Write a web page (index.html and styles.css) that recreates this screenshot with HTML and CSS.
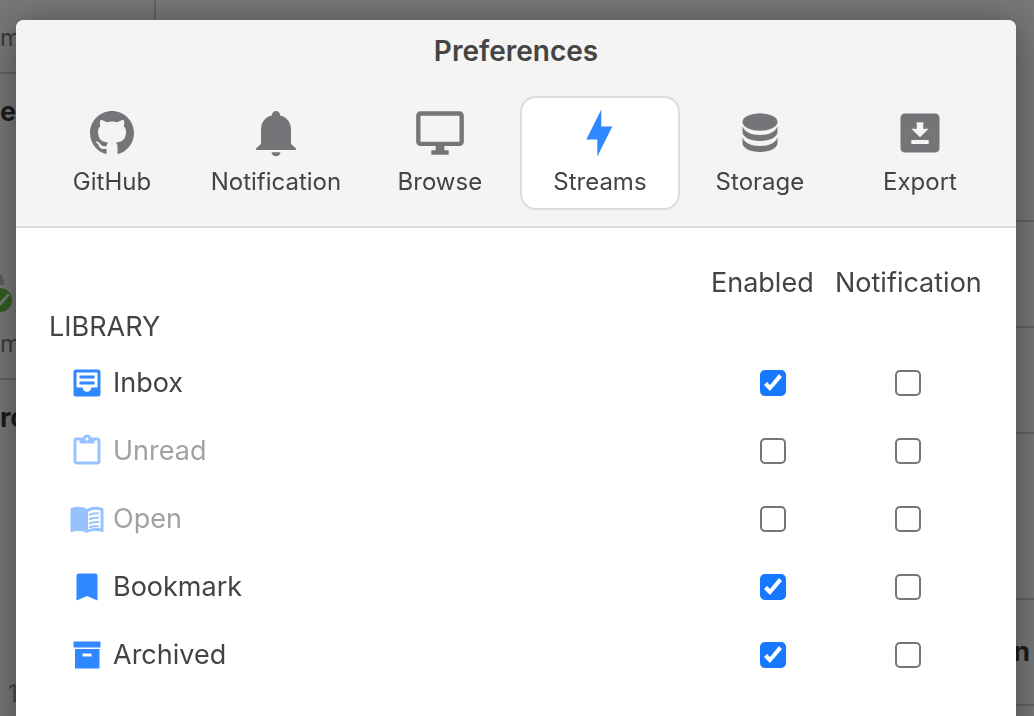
FILE: index.html
```html
<!DOCTYPE html>
<html lang="en">
<head>
<meta charset="utf-8">
<title>Preferences</title>
<link rel="stylesheet" href="styles.css">
</head>
<body>
<div class="app" aria-hidden="true">
  <div class="streams">
    <div class="entry entry-first"><span class="meta">m</span></div>
    <div class="entry">
      <strong class="name">e</strong>
      <svg class="state" viewBox="0 0 16 44"><path d="M-10 0C-2 0 4 6 4 16H-10z" fill="#5b5b5f"/><circle cx="0" cy="31" r="12" fill="#2f5f22"/><path d="M-5 32l4 4L9 25" fill="none" stroke="#777" stroke-width="3"/></svg>
      <span class="meta">m</span>
    </div>
    <div class="entry entry-tall">
      <strong class="name">ro</strong>
      <span class="count">1</span>
    </div>
  </div>
  <div class="issues">
    <div class="issue issue-top"></div>
    <div class="issue"></div>
    <div class="issue"></div>
    <div class="issue issue-tall"></div>
    <div class="issue"><strong>n</strong></div>
  </div>
</div>

<div class="overlay">
  <main class="dialog" role="dialog" aria-labelledby="title">
    <header class="head">
      <h1 id="title" class="title">Preferences</h1>
      <nav class="tabs">
        <button class="tab" type="button">
          <svg class="tab-icon" viewBox="0 0 52 52"><path transform="translate(4 4) scale(2.75)" fill-rule="evenodd" d="M8 0C3.58 0 0 3.58 0 8c0 3.54 2.29 6.53 5.47 7.59.4.07.55-.17.55-.38 0-.19-.01-.82-.01-1.49-2.01.37-2.53-.49-2.69-.94-.09-.23-.48-.94-.82-1.13-.28-.15-.68-.52-.01-.53.63-.01 1.08.58 1.23.82.72 1.21 1.87.87 2.33.66.07-.52.28-.87.51-1.07-1.78-.2-3.64-.89-3.64-3.95 0-.87.31-1.59.82-2.15-.08-.2-.36-1.02.08-2.12 0 0 .67-.21 2.2.82.64-.18 1.32-.27 2-.27.68 0 1.36.09 2 .27 1.53-1.04 2.2-.82 2.2-.82.44 1.1.16 1.92.08 2.12.51.56.82 1.27.82 2.15 0 3.07-1.87 3.75-3.65 3.95.29.25.54.73.54 1.48 0 1.07-.01 1.93-.01 2.2 0 .21.15.46.55.38A8.013 8.013 0 0 0 16 8c0-4.42-3.58-8-8-8z"/></svg>
          <span>GitHub</span>
        </button>
        <button class="tab" type="button">
          <svg class="tab-icon" viewBox="0 0 52 52"><path d="M26 4c2.300 0 3.900 1.500 4.200 4.500C37 10 41 15.500 41 22.500V37l5 4.500V43H6v-1.500l5-4.500V22.500C11 15.500 15 10 21.800 8.500 22.100 5.500 23.700 4 26 4z"/><path d="M21.500 45.300h9c-.5 2.500-2.200 4-4.500 4s-4-1.500-4.500-4z"/></svg>
          <span>Notification</span>
        </button>
        <button class="tab" type="button">
          <svg class="tab-icon" viewBox="0 0 24 24"><path d="M21 2H3c-1.100 0-2 .9-2 2v12c0 1.100.9 2 2 2h7v2H8v2h8v-2h-2v-2h7c1.100 0 2-.9 2-2V4c0-1.100-.9-2-2-2zm0 14H3V4h18v12z"/></svg>
          <span>Browse</span>
        </button>
        <button class="tab tab-active" type="button" aria-current="page">
          <svg class="tab-icon" viewBox="0 0 52 52"><path d="M27.300 2.500v17H38.300l-15 30v-17H12.300z"/></svg>
          <span>Streams</span>
        </button>
        <button class="tab" type="button">
          <svg class="tab-icon" viewBox="0 0 52 52"><ellipse cx="26" cy="15" rx="17.500" ry="8.700"/><path d="M8.500 19.500c2 5 8.500 8.500 17.500 8.500s15.500-3.500 17.500-8.500V25c0 5-7.500 9-17.500 9S8.500 30 8.500 25z"/><path d="M8.500 30.500c2 5 8.500 8.500 17.500 8.500s15.500-3.500 17.500-8.500V36c0 5-7.500 9-17.500 9S8.500 41 8.500 36z"/></svg>
          <span>Storage</span>
        </button>
        <button class="tab" type="button">
          <svg class="tab-icon" viewBox="0 0 24 24"><path fill-rule="evenodd" d="M5 3h14a2 2 0 0 1 2 2v14a2 2 0 0 1-2 2H5a2 2 0 0 1-2-2V5a2 2 0 0 1 2-2zM10.500 7v3H8l4 4 4-4h-2.500V7zM8 15.200v1.900h8v-1.900z"/></svg>
          <span>Export</span>
        </button>
      </nav>
    </header>

    <section class="body">
      <table class="grid">
        <thead>
          <tr><td></td><th class="col-enabled" id="enabled" scope="col">Enabled</th><th class="col-notify" id="notify" scope="col">Notification</th></tr>
        </thead>
        <tbody>
          <tr class="group"><th scope="rowgroup" colspan="3">LIBRARY</th></tr>
          <tr>
            <th scope="row"><div class="stream"><svg class="icon" viewBox="0 0 36 36"><path fill-rule="evenodd" d="M7 4.500h22a2.500 2.500 0 0 1 2.500 2.500v22a2.500 2.500 0 0 1-2.500 2.500H7A2.500 2.500 0 0 1 4.500 29V7A2.500 2.500 0 0 1 7 4.500zM7.500 7.500v15h6c.3 2.500 2 4.200 4.500 4.200s4.200-1.700 4.500-4.200h6v-15z"/><path d="M10.500 10.500h15v3h-15zM10.500 16.500h15v3h-15z"/></svg><span id="inbox">Inbox</span></div></th>
            <td class="col-enabled"><input class="check" type="checkbox" aria-labelledby="inbox enabled" checked></td>
            <td class="col-notify"><input class="check" type="checkbox" aria-labelledby="inbox notify"></td>
          </tr>
          <tr>
            <th scope="row"><div class="stream stream-off"><svg class="icon" viewBox="0 0 24 24"><path d="M19 3h-4.200C14.400 1.800 13.300 1 12 1s-2.400.8-2.800 2H5c-1.100 0-2 .9-2 2v14c0 1.100.9 2 2 2h14c1.100 0 2-.9 2-2V5c0-1.100-.9-2-2-2zm-7 0c.55 0 1 .45 1 1s-.45 1-1 1-1-.45-1-1 .45-1 1-1zm7 16H5V5h2v2h10V5h2v14z"/></svg><span id="unread">Unread</span></div></th>
            <td class="col-enabled"><input class="check" type="checkbox" aria-labelledby="unread enabled"></td>
            <td class="col-notify"><input class="check" type="checkbox" aria-labelledby="unread notify"></td>
          </tr>
          <tr>
            <th scope="row"><div class="stream stream-off"><svg class="icon" viewBox="0 0 36 36"><path fill-rule="evenodd" d="M1.500 7.500C6 5 13.500 5 18 8c4.500-3 12-3 16.500-.5v24c-5-2-12-2-16.500.5-4.500-2.500-11.500-2.500-16.500-.5zM19 11v17.800c4-1.800 8.500-2.200 12.500-1.300V9.500C27.500 8 23 8.500 19 11z"/><path d="M20 14c3-1.500 6-2 10-1.500M20 18.300c3-1.500 6-2 10-1.500M20 22.600c3-1.500 6-2 10-1.500M20 26.500c3-1.200 6-1.400 10-1" fill="none" stroke="currentColor" stroke-width="2"/></svg><span id="open">Open</span></div></th>
            <td class="col-enabled"><input class="check" type="checkbox" aria-labelledby="open enabled"></td>
            <td class="col-notify"><input class="check" type="checkbox" aria-labelledby="open notify"></td>
          </tr>
          <tr>
            <th scope="row"><div class="stream"><svg class="icon" viewBox="0 0 36 36"><path d="M10 4.500h16a2.500 2.500 0 0 1 2.500 2.500v24.500L18 27 7.500 31.500V7A2.500 2.500 0 0 1 10 4.500z"/></svg><span id="bookmark">Bookmark</span></div></th>
            <td class="col-enabled"><input class="check" type="checkbox" aria-labelledby="bookmark enabled" checked></td>
            <td class="col-notify"><input class="check" type="checkbox" aria-labelledby="bookmark notify"></td>
          </tr>
          <tr>
            <th scope="row"><div class="stream"><svg class="icon" viewBox="0 0 36 36"><path fill-rule="evenodd" d="M4.500 4.500h27v6h-27zM6 12h24.500v19.500H6zM13.500 16.500v3h9v-3z"/></svg><span id="archived">Archived</span></div></th>
            <td class="col-enabled"><input class="check" type="checkbox" aria-labelledby="archived enabled" checked></td>
            <td class="col-notify"><input class="check" type="checkbox" aria-labelledby="archived notify"></td>
          </tr>
        </tbody>
      </table>
    </section>
  </main>
</div>
</body>
</html>
```
FILE: styles.css
```css
* { box-sizing: border-box; }

body {
  margin: 0;
  height: 100vh;
  overflow: hidden;
  background: #787878;
  color: #444;
  font-family: Inter, "Liberation Sans", sans-serif;
  font-size: 27px;
  line-height: 32px;
}

/* Dimmed main window */
.app { display: flex; height: 100vh; overflow: hidden; }
.streams { width: 156px; flex: none; border-right: 2px solid #626262; }
.entry {
  display: flex;
  flex-direction: column;
  height: 306px;
  padding: 22px 0 18px;
  border-bottom: 2px solid #626262;
  overflow: hidden;
}
.entry-first { height: 74px; }
.entry-tall { height: 338px; padding-bottom: 6px; }
.meta { font-size: 24px; color: #3c3c3c; }
.name { color: #1c1c1c; }
.state { width: 16px; height: 44px; margin: 141px 0 15px; }
.count { margin: auto 0 0 8px; font-size: 24px; }
.issues { flex: 1; }
.issue {
  display: flex;
  align-items: center;
  justify-content: flex-end;
  height: 106px;
  padding-right: 4px;
  border-bottom: 2px solid #626262;
  color: #1c1c1c;
}
.issue-top { height: 222px; }
.issue-tall { height: 166px; }

/* Dialog */
.overlay { position: fixed; inset: 0; padding: 20px 18px 0 16px; overflow: hidden; }
.dialog {
  min-height: 110vh;
  border-radius: 8px;
  background: #fff;
  box-shadow: 0 4px 36px rgba(0, 0, 0, .4);
  overflow: hidden;
}
.head { padding: 15px 16px 16px; background: #f4f4f2; border-bottom: 2px solid #dcdcdc; }
.title { margin: 0 0 29px; text-align: center; font-size: 28px; font-weight: 600; line-height: 32px; }

.tabs { display: flex; justify-content: center; }
.tab {
  display: flex;
  flex: 160 1 0;
  flex-direction: column;
  align-items: center;
  gap: 7px;
  padding: 9px 0 10px;
  border: 2px solid transparent;
  border-radius: 16px;
  background: none;
  color: #444;
  font: inherit;
  font-size: 24px;
  line-height: 32px;
}
.tab:nth-child(2) { flex-grow: 168; }
.tab-active { background: #fff; border-color: #dcdcdc; }
.tab-icon { width: 52px; height: 52px; fill: #737578; }
.tab-active .tab-icon { fill: #2f88ff; }

.body { padding: 33px 32px 0 33px; }
.grid { width: 100%; border-collapse: collapse; table-layout: fixed; }
.grid th, .grid td { padding: 0; font-weight: 400; text-align: left; }
.grid thead { line-height: 44px; }
.grid .group { line-height: 44px; }
.grid .col-enabled { width: 124px; }
.grid .col-notify { width: 149px; }
.grid td.col-notify { padding-right: 4px; }

.stream { display: flex; align-items: center; gap: 8px; height: 68px; padding-left: 20px; }
.stream-off { opacity: .5; }
.icon { width: 36px; height: 36px; fill: #2f88ff; color: #2f88ff; }

.check {
  appearance: none;
  display: block;
  width: 26px;
  height: 26px;
  margin: 0 auto;
  border: 2px solid #767676;
  border-radius: 5px;
  background: #fff;
}
.check:checked { border: 0; background: #1677ff; }
.check:checked::before {
  content: "";
  display: block;
  width: 26px;
  height: 26px;
  background: #fff;
  clip-path: polygon(4px 15px, 7px 12px, 10px 15px, 19px 4px, 22px 7px, 10px 21px);
}
```
